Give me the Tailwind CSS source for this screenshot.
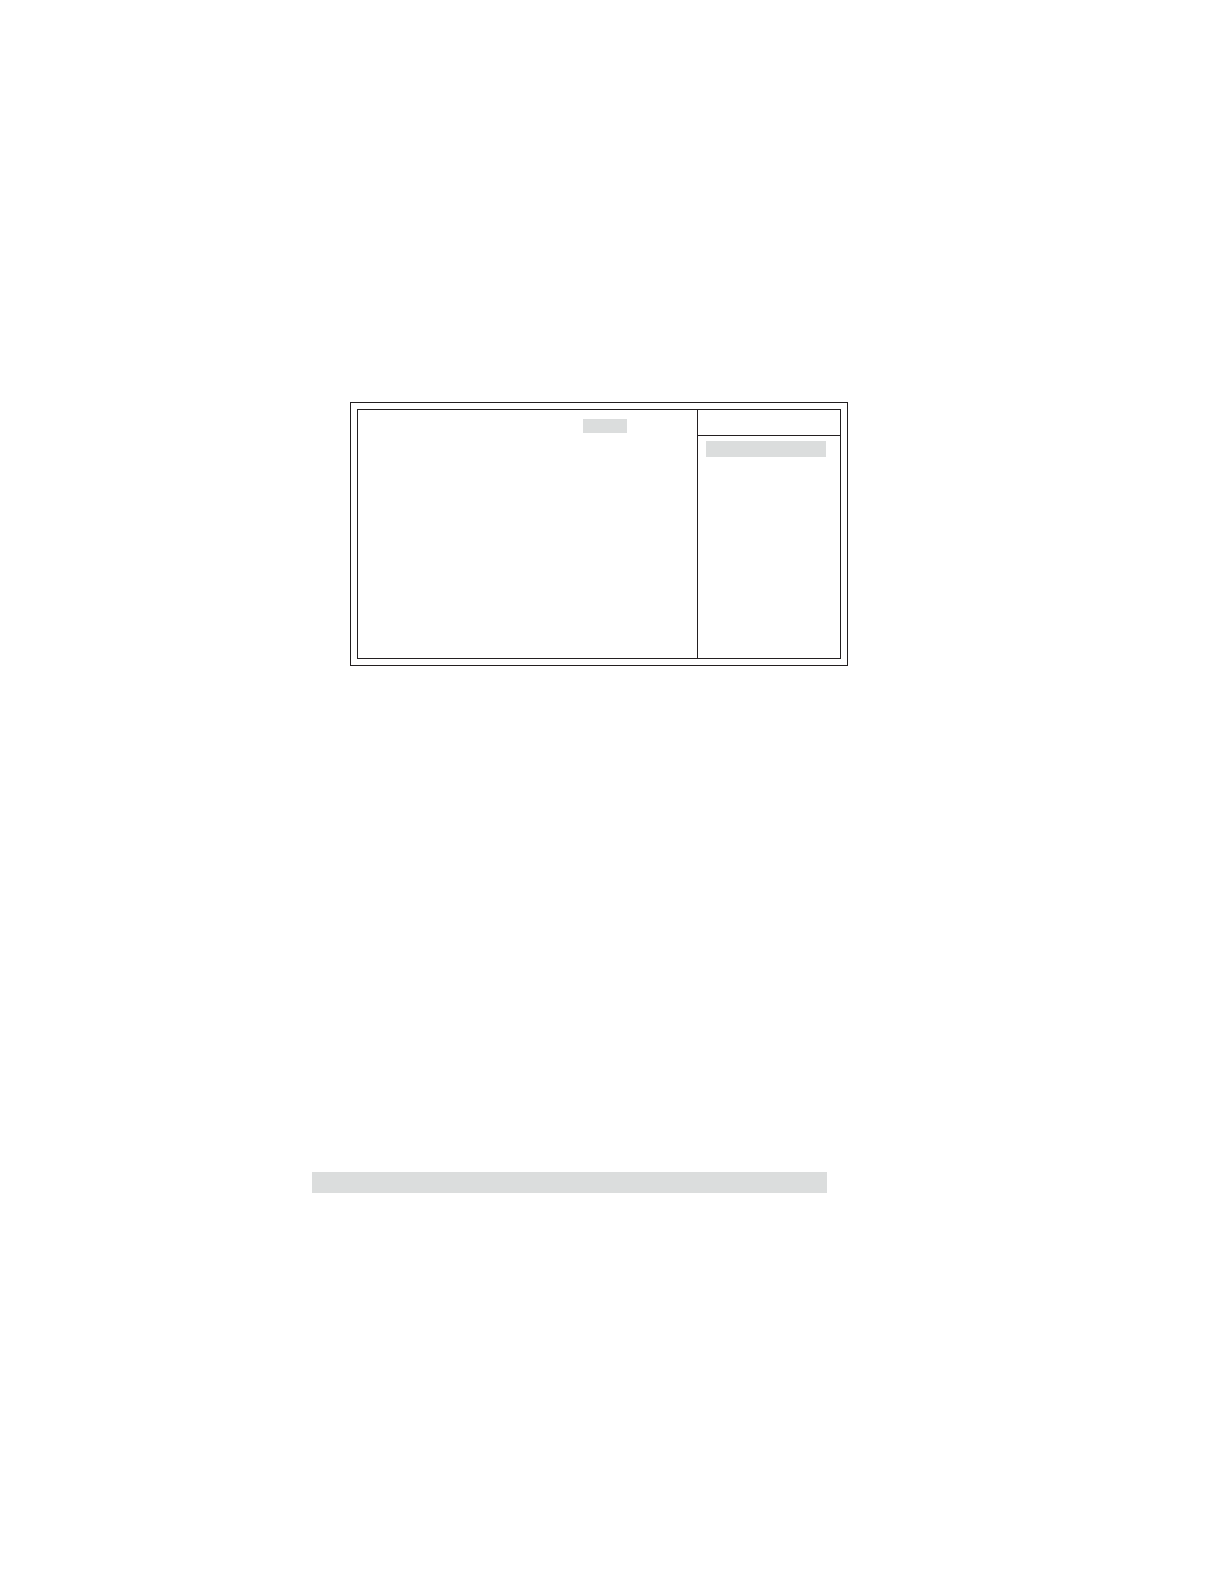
<!DOCTYPE html>
<html lang="en">
<head>
<meta charset="utf-8">
<meta name="viewport" content="width=device-width, initial-scale=1">
<title>Setup screen</title>
<script src="https://cdn.jsdelivr.net/npm/@tailwindcss/browser@4"></script>
</head>
<body class="min-h-screen bg-white">
<main class="flex flex-col pt-[402px] pr-[376px] pb-16 pl-[312px]">
  <!-- Double-ruled panel: settings on the left, help on the right -->
  <section class="ml-[38px] border border-[#231f20] p-1.5">
    <div class="flex min-h-[250px] border border-[#231f20]">
      <div class="flex flex-1 items-start justify-end pt-[9px] pr-[70px]">
        <div class="h-3.5 w-11 bg-[#dbdddd]"></div>
      </div>
      <aside class="flex w-[143px] flex-col border-l border-[#231f20]">
        <div class="h-[26px] border-b border-[#231f20]"></div>
        <div class="pt-[5px] pr-3.5 pl-2">
          <div class="h-4 bg-[#dbdddd]"></div>
        </div>
      </aside>
    </div>
  </section>
  <!-- Shaded strip -->
  <div class="mt-[506px] mr-[21px] h-[21px] bg-[#dbdddd]"></div>
</main>
</body>
</html>
